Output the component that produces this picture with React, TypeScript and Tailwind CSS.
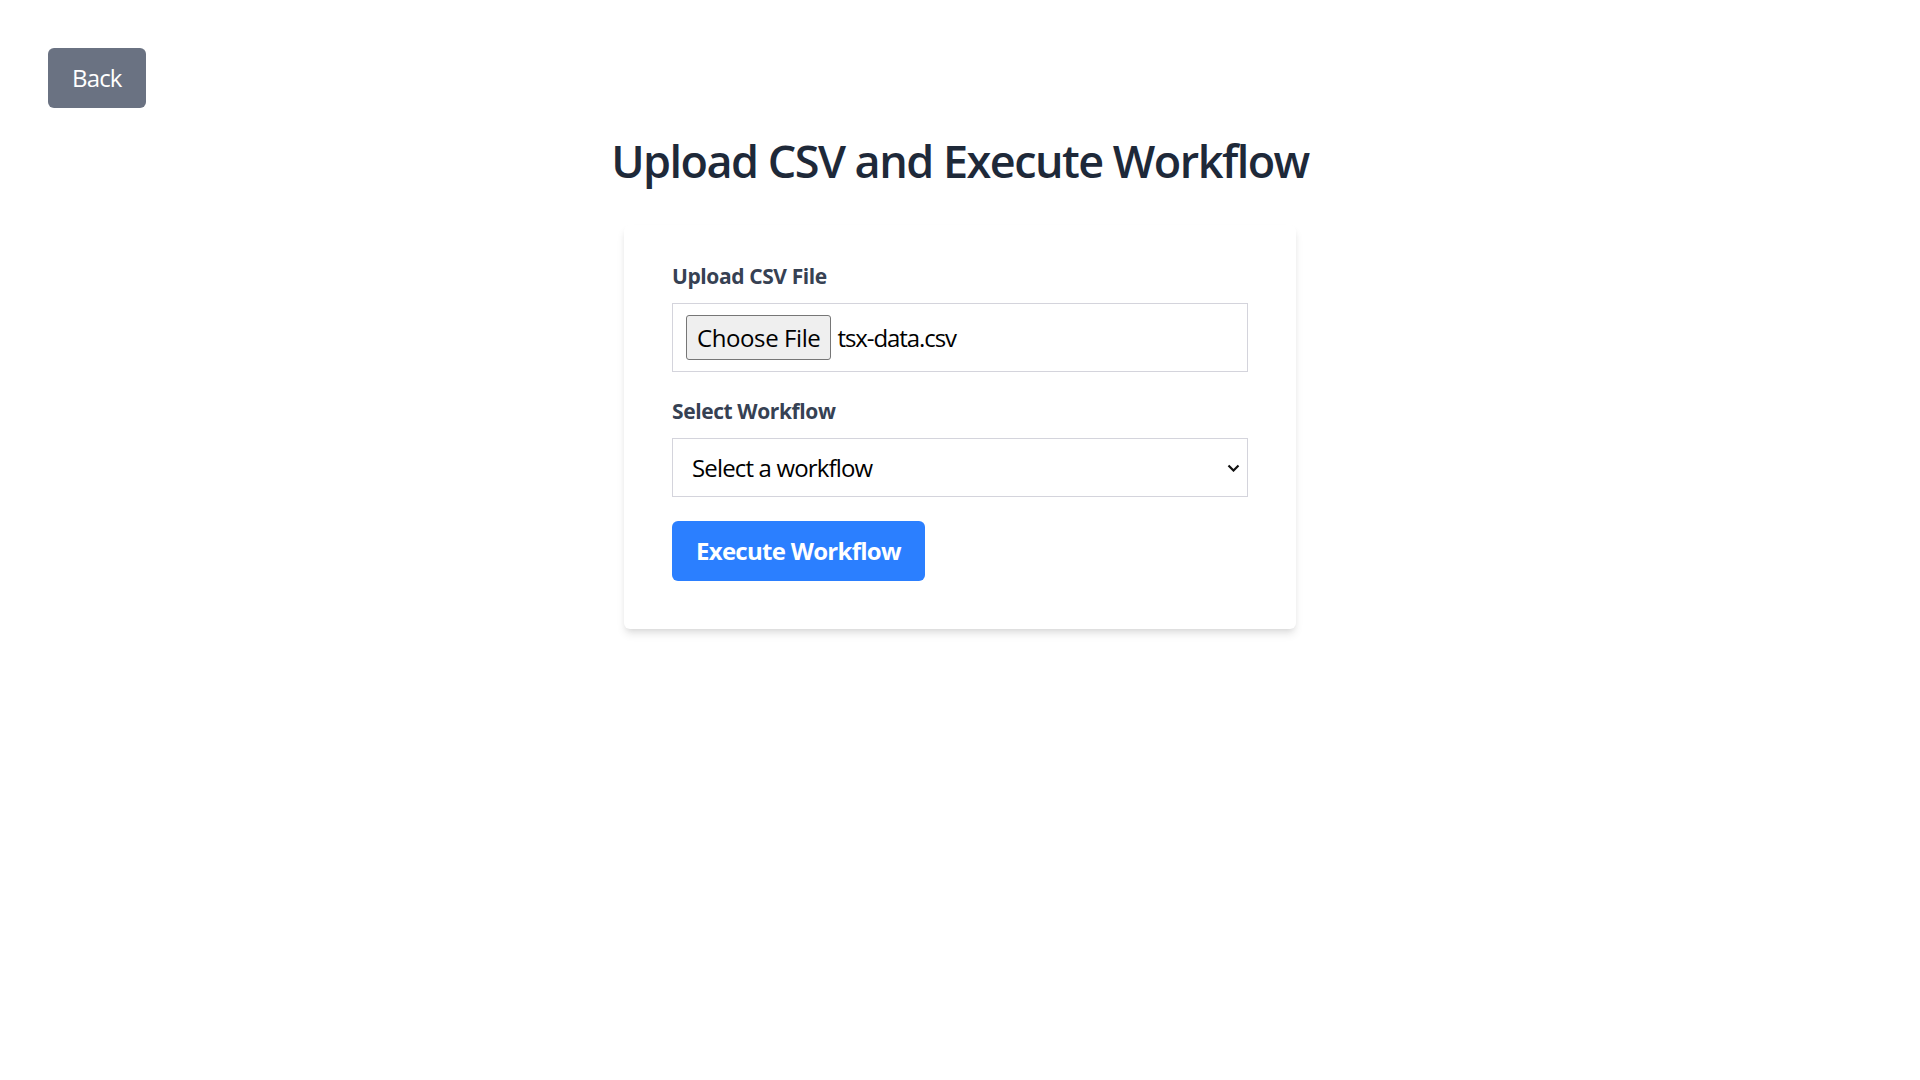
import { useState } from 'react'

export default function App() {
  const [workflow, setWorkflow] = useState('')

  return (
    <div className="min-h-screen bg-white p-12 font-['Open_Sans',sans-serif] tracking-tight">
      <button className="rounded-md bg-gray-500 px-6 py-3 text-2xl leading-9 tracking-[-0.035em] text-white">Back</button>

      <h1 className="mt-[26px] mb-[37px] text-center text-[45px] leading-[54px] font-semibold tracking-[-0.034em] text-gray-800">
        Upload CSV and Execute Workflow
      </h1>

      <div className="mx-auto w-[672px] rounded-md bg-white px-12 pt-9 pb-12 shadow-[0_6px_9px_-1.5px_rgb(0_0_0/0.1),0_3px_6px_-3px_rgb(0_0_0/0.1)]">
        <label className="mb-3 block text-[21px] leading-[30px] font-bold text-gray-700">Upload CSV File</label>
        <div className="mb-6 flex h-[69px] items-center border border-[#d4d4dc] px-[13px]">
          <span className="flex h-[45px] items-center rounded-[3px] border border-[#767676] bg-[#efefef] px-[10px] text-2xl text-black">
            Choose File
          </span>
          <span className="ml-[6px] text-2xl tracking-[-0.045em] text-black">tsx-data.csv</span>
        </div>

        <label className="mb-3 block text-[21px] leading-[30px] font-bold text-gray-700">Select Workflow</label>
        <div className="relative mb-6">
          <select
            value={workflow}
            onChange={(e) => setWorkflow(e.target.value)}
            className="h-[59px] w-full appearance-none border border-[#d4d4dc] bg-white pl-[19px] text-2xl tracking-[-0.035em] text-black outline-none"
          >
            <option value="">Select a workflow</option>
          </select>
          <svg
            className="pointer-events-none absolute top-1/2 right-[8px] -translate-y-1/2"
            width="13"
            height="8"
            viewBox="0 0 13 8"
            fill="none"
          >
            <path d="M1.5 1.5 L6.5 6.5 L11.5 1.5" stroke="#111" strokeWidth="2.2" />
          </svg>
        </div>

        <button className="h-[60px] rounded-md bg-blue-500 px-6 text-2xl font-bold tracking-[-0.03em] text-white">
          Execute Workflow
        </button>
      </div>
    </div>
  )
}
